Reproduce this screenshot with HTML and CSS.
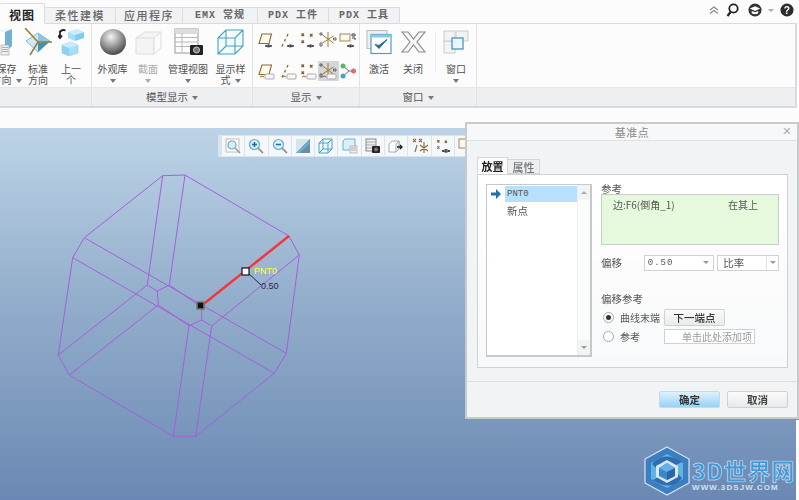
FILE: index.html
```html
<!DOCTYPE html>
<html lang="zh">
<head>
<meta charset="utf-8">
<title>基准点</title>
<link rel="stylesheet" href="styles.css">
</head>
<body>
<svg class="defs" width="0" height="0" aria-hidden="true">
  <defs>
    <symbol id="eye" viewBox="0 0 18 18"><path d="M8 15q3.500-2.500 7 0q-3.500 2-7 0z" fill="#fff" stroke="#444"/><circle cx="11.500" cy="15" r="1" fill="#333"/></symbol>
    <symbol id="tag" viewBox="0 0 18 18"><rect x="8" y="12" width="9" height="5" rx="1" fill="#f8f8f8" stroke="#aaa"/><path d="M3 15q2-2 4 0" fill="none" stroke="#8a6a30"/></symbol>
    <symbol id="plane" viewBox="0 0 18 18"><path d="M2 12.500L5 3H14.500L12 12.500Z" fill="#fdf9ee" stroke="#8a6a30" stroke-width="1.100"/></symbol>
    <symbol id="axis" viewBox="0 0 18 18"><path d="M9 3L8 5.500M6.500 8L5.500 10.500M4 13L3 15.500" stroke="#8a6a30" stroke-width="1.300" fill="none"/></symbol>
    <symbol id="pts" viewBox="0 0 18 18"><path d="M2.500 2.500l2.500 2.500m0-2.500l-2.500 2.500M11 3l2.500 2.500m0-2.500l-2.500 2.500M2.500 9.500l2.500 2.500m0-2.500l-2.500 2.500" stroke="#7b5d2a" stroke-width="1.200" fill="none"/></symbol>
    <symbol id="csys" viewBox="0 0 18 18"><path d="M9 1V16M3.500 4L14.500 12M3.500 12L14.500 5" stroke="#a07a30" stroke-width="1" fill="none"/><path d="M1 2h2v2H1zM14.500 7h2.500v2h-2.500zM1 12h2v3H1z" fill="none" stroke="#444" stroke-width=".8"/></symbol>
    <symbol id="note" viewBox="0 0 18 18"><rect x="1" y="3" width="10" height="7" fill="#fdf7e8" stroke="#a08a60"/><path d="M13 3h3v2h-3zM13 7h3v2" fill="none" stroke="#444"/></symbol>
  </defs>
</svg>

<header class="head">
  <div class="topbar">
    <nav class="tabs">
      <span class="tab tab-on">视图</span>
      <span class="tab tab-a">柔性建模</span>
      <span class="tab tab-b">应用程序</span>
      <span class="tab tab-c">EMX 常规</span>
      <span class="tab tab-d">PDX 工件</span>
      <span class="tab tab-d">PDX 工具</span>
    </nav>
    <div class="tools">
      <svg width="10" height="8" viewBox="0 0 10 8"><path d="M1 4l4-3 4 3M1 7.500l4-3 4 3" fill="none" stroke="#888" stroke-width="1.100"/></svg>
      <svg width="13" height="14" viewBox="0 0 13 14"><circle cx="7.500" cy="5.500" r="4.200" fill="#fff" stroke="#222" stroke-width="1.800"/><path d="M4.500 9L1.500 13" stroke="#222" stroke-width="2.200"/></svg>
      <svg class="tool-hat" width="14" height="14" viewBox="0 0 15 15"><circle cx="7.500" cy="7.500" r="7" fill="#333"/><path d="M2 6l5.500-2.500L13 6 7.500 8.500z" fill="#fff"/><path d="M4 8.500v2.500q3.500 2 7 0V8.500L7.500 10z" fill="#fff"/></svg>
      <span class="tool-caret"></span>
      <svg width="14" height="14" viewBox="0 0 15 15"><circle cx="7.500" cy="7.500" r="7" fill="#2d2d2d"/><text class="help" x="7.500" y="11.500" text-anchor="middle">?</text></svg>
    </div>
  </div>

  <section class="ribbon">
    <div class="group g1">
      <div class="items i1">
        <div class="item"><svg class="ic" width="27" height="28" viewBox="5 0 27 28"><path d="M0 3L5 1H24V18L19 24H0z" fill="#eef6fa"/><path d="M17 4L24 1V18L17 24z" fill="#6fb3d2"/><path d="M0 4H17V24H0z" fill="#fff"/><rect x="13" y="17" width="8" height="10" fill="#eee" stroke="#999" stroke-width=".6"/><path d="M14 19.500h6M14 21.500h6M14 23.500h6" stroke="#888" stroke-width=".6"/></svg><span class="lb">保存<br>方向<i class="car in"></i></span></div>
        <div class="item"><svg class="ic" width="28" height="28" viewBox="0 0 28 28"><path d="M2 13L14 5L26 13L14 24Z" fill="#cfeaf5" stroke="#7cb8d5"/><path d="M14 15L26 13L14 24Z" fill="#3f91b8"/><path d="M14 5L26 13L14 15Z" fill="#8cc6df"/><path d="M1 0L14 14M14 14H28M14 14L6 27" stroke="#9c7a35" stroke-width="1.500"/></svg><span class="lb">标准<br>方向</span></div>
        <div class="item"><svg class="ic" width="26" height="28" viewBox="0 0 26 28"><path d="M4 17L13 14L20 17V25L11 28L4 25Z" fill="#a6e0f8" stroke="#7cc6e6" stroke-width=".5"/><path d="M4 17L11 20V28L4 25Z" fill="#8ed2f1"/><path d="M4 17L13 14L20 17L11 20Z" fill="#c8eefc"/><path d="M10 4L19 1L26 4L17 7Z" fill="#c9ecfa"/><path d="M10 4L17 7V13L10 10Z" fill="#a4dff7"/><path d="M17 7L26 4V10L17 13Z" fill="#7fcdf0"/><path d="M1.500 4q3-3 6-1.500M2 3.500v6m-2-2l2 2.500 2-2.500" fill="none" stroke="#222" stroke-width="1.800"/></svg><span class="lb">上一<br>个</span></div>
      </div>
      <div class="cap"></div>
    </div>

    <div class="group g2">
      <div class="items i2">
        <div class="item"><svg class="ic" width="26" height="26" viewBox="0 0 26 26"><defs><radialGradient id="sph" cx=".42" cy=".3" r=".8"><stop offset="0" stop-color="#f4f4f4"/><stop offset=".55" stop-color="#8a8a8a"/><stop offset="1" stop-color="#2f2f2f"/></radialGradient></defs><circle cx="13" cy="13" r="13" fill="url(#sph)"/></svg><span class="lb">外观库<br><i class="car"></i></span></div>
        <div class="item off"><svg class="ic" width="27" height="26" viewBox="0 0 27 26"><path d="M1 9L10 3H26L19 9V25H1z" fill="#f4f4f4" stroke="#ddd"/><path d="M19 9L26 3V19L19 25z" fill="#fbfbfb" stroke="#ddd"/><path d="M1 9H19" stroke="#ddd"/></svg><span class="lb">截面<br><i class="car"></i></span></div>
        <div class="item"><svg class="ic" width="29" height="28" viewBox="0 0 29 28"><rect x="1" y="1" width="23" height="24" fill="#fdfdfd" stroke="#999"/><path d="M1 5H24M1 9.500H24M1 14H24M1 18.500H24" stroke="#b9b9b9"/><path d="M1 1H24V5H1z" fill="#ddd"/><path d="M8 5V25" stroke="#b9b9b9"/><rect x="16" y="17" width="13" height="10" rx="1" fill="#222"/><circle cx="22.500" cy="22" r="3" fill="#777" stroke="#ccc"/></svg><span class="lb">管理视图<br><i class="car"></i></span></div>
        <div class="item"><svg class="ic" width="27" height="26" viewBox="0 0 27 26"><path d="M1 9L9 1H26V17L18 25H1zM1 9H18V25M18 9L26 1M9 1V17H26M1 25L9 17" fill="#f2fafd" stroke="#4aa0c8" stroke-width="1.100"/></svg><span class="lb">显示样<br>式<i class="car in"></i></span></div>
      </div>
      <div class="cap">模型显示<i class="car in"></i></div>
    </div>

    <div class="group g3">
      <div class="items grid5">
        <span class="mini"><svg width="18" height="18"><use href="#plane"/><use href="#eye"/></svg></span>
        <span class="mini"><svg width="18" height="18"><use href="#axis"/><use href="#eye"/></svg></span>
        <span class="mini"><svg width="18" height="18"><use href="#pts"/><use href="#eye"/></svg></span>
        <span class="mini"><svg width="18" height="18"><use href="#csys"/></svg></span>
        <span class="mini"><svg width="18" height="18"><use href="#note"/><use href="#eye"/></svg></span>
        <span class="mini"><svg width="18" height="18"><use href="#plane"/><use href="#tag"/></svg></span>
        <span class="mini"><svg width="18" height="18"><use href="#axis"/><use href="#tag"/></svg></span>
        <span class="mini"><svg width="18" height="18"><use href="#pts"/><use href="#tag"/></svg></span>
        <span class="mini mini-on"><svg width="18" height="18"><use href="#csys"/><use href="#tag"/></svg></span>
        <span class="mini"><svg width="18" height="18" viewBox="0 0 18 18"><path d="M4 4L10 9L4 14M10 9H15" stroke="#777" fill="none"/><circle cx="4" cy="4" r="2.500" fill="#5cb85c"/><circle cx="4" cy="14" r="2.500" fill="#4a9fd0"/><circle cx="14.500" cy="9" r="2.500" fill="#e06a6a"/></svg></span>
      </div>
      <div class="cap">显示<i class="car in"></i></div>
    </div>

    <div class="group g4">
      <div class="items i4">
        <div class="item"><svg class="ic" width="26" height="25" viewBox="0 0 26 25"><rect x="1" y="1" width="20" height="18" fill="#eee" stroke="#bbb"/><rect x="5" y="5" width="20" height="19" fill="#fff" stroke="#4b9fc6" stroke-width="1.200"/><path d="M5 5H25V8H5z" fill="#8cc6df"/><path d="M9 15l4 4 8-9-8 6z" fill="#1e6d92" stroke="#1e6d92"/></svg><span class="lb">激活</span></div>
        <div class="item"><svg class="ic" width="25" height="22" viewBox="0 0 25 22"><path d="M1 1H7L12.500 8L18 1H24L16 11L24 21H18L12.500 14L7 21H1L9 11Z" fill="#f6f6f6" stroke="#8c8c8c" stroke-width="1.200"/></svg><span class="lb">关闭</span></div>
        <span class="vsep"></span>
        <div class="item"><svg class="ic" width="26" height="24" viewBox="0 0 26 24"><rect x="1" y="11" width="11" height="12" fill="#f3f3f3" stroke="#ccc"/><rect x="1" y="1" width="11" height="10" fill="#f3f3f3" stroke="#ccc"/><rect x="13" y="1" width="12" height="10" fill="#f3f3f3" stroke="#ccc"/><rect x="9" y="8" width="11" height="11" fill="#eaf6fc" stroke="#3f8fb8" stroke-width="1.200"/></svg><span class="lb">窗口<br><i class="car"></i></span></div>
      </div>
      <div class="cap">窗口<i class="car in"></i></div>
    </div>

    <div class="group g5"><div class="items"></div><div class="cap"></div></div>
  </section>
</header>

<div class="spacer"></div>

<main class="canvas">
  <div class="viewbar">
    <span class="vb"><svg width="16" height="16" viewBox="0 0 16 16"><rect x="1" y="1" width="13" height="13" fill="#fff" stroke="#bbb"/><circle cx="7" cy="7" r="4" fill="#d8edf6" stroke="#6aaac8" stroke-width="1.200"/><path d="M10 10l5 5" stroke="#999" stroke-width="1.600"/></svg></span>
    <span class="vb"><svg width="16" height="16" viewBox="0 0 16 16"><circle cx="6.500" cy="6.500" r="5" fill="#d8edf6" stroke="#6aaac8" stroke-width="1.200"/><path d="M4 6.500h5M6.500 4v5" stroke="#1f6f96" stroke-width="1.500"/><path d="M10 10l5 5" stroke="#999" stroke-width="1.800"/></svg></span>
    <span class="vb"><svg width="16" height="16" viewBox="0 0 16 16"><circle cx="6.500" cy="6.500" r="5" fill="#d8edf6" stroke="#6aaac8" stroke-width="1.200"/><path d="M4 6.500h5" stroke="#1f6f96" stroke-width="1.500"/><path d="M10 10l5 5" stroke="#999" stroke-width="1.800"/></svg></span>
    <span class="vb"><svg width="14" height="14" viewBox="0 0 14 14"><rect width="14" height="14" fill="#d6e4ec"/><path d="M0 14L14 0V14z" fill="#6f8d9e"/><path d="M2 14L14 3" stroke="#5db7de" stroke-width="2"/></svg></span>
    <span class="vb"><svg width="16" height="16" viewBox="0 0 16 16"><path d="M1 5L5 1H14V11L10 15H1zM1 5H10V15M10 5L14 1M5 1V11H14M1 15L5 11" fill="#f2fafd" stroke="#4aa0c8"/></svg></span>
    <span class="vb"><svg width="16" height="16" viewBox="0 0 16 16"><path d="M1 3L3 1H13V12H1z" fill="#d9eff9" stroke="#6fb3d2"/><rect x="8" y="8" width="7" height="7" fill="#eee" stroke="#999" stroke-width=".6"/><path d="M9 10h5M9 12h5" stroke="#888" stroke-width=".6"/></svg></span>
    <span class="vb"><svg width="16" height="16" viewBox="0 0 16 16"><rect x="1" y="1" width="10" height="12" fill="#eee" stroke="#888"/><path d="M1 4h10M1 7h10M1 10h10" stroke="#aaa"/><rect x="7" y="8" width="8" height="7" rx="1" fill="#222"/><circle cx="11" cy="11.500" r="2" fill="#777"/></svg></span>
    <span class="vb"><svg width="16" height="16" viewBox="0 0 16 16"><path d="M1 6L4 3H11V11L8 14H1z" fill="#fff" stroke="#aaa"/><path d="M8 6L11 3V11L8 14z" fill="#e8f3f8" stroke="#aaa"/><path d="M9 9h5M12 7l2 2-2 2" stroke="#222" stroke-width="1.300" fill="none"/></svg></span>
    <span class="vb"><svg width="16" height="16" viewBox="0 0 16 16"><path d="M1 1l3 3m0-3l-3 3M7 1l3 3m0-3l-3 3M5 7L3 14M12 4v11M8 7l8 6M8 13l8-6" stroke="#8a6a30" stroke-width="1.100" fill="none"/></svg></span>
    <span class="vb"><svg width="16" height="16" viewBox="0 0 16 16"><use href="#pts"/><path d="M7 13q4-3 8 0q-4 2.500-8 0z" fill="#fff" stroke="#333"/><circle cx="11" cy="13" r="1" fill="#333"/></svg></span>
    <span class="vb"><svg width="16" height="16" viewBox="0 0 16 16"><rect x="1" y="1" width="12" height="9" fill="#fdf7e8" stroke="#a08a60"/><path d="M9 13h6" stroke="#222" stroke-width="1.500"/></svg></span>
    <span class="vb"></span>
  </div>

  <svg class="model" viewBox="0 128 796 372" width="796" height="372" aria-hidden="true">
    <g fill="none" stroke="#a45fdc" stroke-width="1">
      <path d="M162.700 175.700L185 175L289 236L299.300 255L286.300 353.300L274.300 373.300L195.700 436.300L173.300 436.300L69.300 375L58.300 355L72.700 257.700L84.300 237.700Z"/>
      <path d="M162.700 175.700L147.300 285L157.300 291L169.300 285L185 175"/>
      <path d="M157.300 291L158.300 305L189 325.700L173.300 436.300M195.700 436.300L211.700 326L201.700 320L189 325.700"/>
      <path d="M201.700 306V320M169.300 285L200 306"/>
      <path d="M84.300 237.700L286.300 353.300M72.700 257.700L274.300 373.300"/>
      <path d="M147.300 285L58.300 355M158.300 305L69.300 375M211.700 326L299.300 255"/>
    </g>
    <path d="M200.500 306.500L289 236" stroke="#f6333a" stroke-width="2.400"/>
    <path d="M247 272L261 285" stroke="#1c2a4a" stroke-width="1"/>
    <rect x="197" y="302" width="7" height="7" fill="#111" stroke="#777" stroke-width="1.500"/>
    <rect x="242" y="268" width="7" height="7" fill="#fff" stroke="#111" stroke-width="1.200"/>
    <text class="t-pnt" x="254" y="274">PNT0</text>
    <text class="t-val" x="261" y="289">0.50</text>
  </svg>

  <div class="brand">
    <svg width="46" height="50" viewBox="0 0 46 50"><path d="M23 1L45 13V37L23 49L1 37V13Z" fill="#3d7ec0" stroke="#d7e6f3" stroke-width="1.200"/><path d="M23 8L39 17V33L23 42L7 33V17Z" fill="#5fb4e2"/><path d="M8 18Q20 4 38 16L30 20Q20 12 14 24Z" fill="#2f6cb0"/><path d="M38 32Q28 46 9 34L17 30Q26 38 32 26Z" fill="#2f6cb0"/><path d="M23 14L34 20V31L23 37L12 31V20Z" fill="#d7e6f3"/><path d="M23 17L31 22V30L23 34L15 30V22Z" fill="#3f86c8"/><path d="M23 17L31 22L23 26L15 22Z" fill="#65b0e6"/><path d="M23 26L31 22V30L23 34Z" fill="#2a66a8"/></svg>
    <div class="brand-text"><span class="brand-name">3D世界网</span><span class="brand-url">WWW.3DSJW.COM</span></div>
  </div>
</main>

<aside class="dialog">
  <div class="d-title"><span>基准点</span><span class="d-x">✕</span></div>
  <div class="d-body">
    <div class="d-tabs"><span class="d-tab d-tab-on">放置</span><span class="d-tab">属性</span></div>
    <div class="d-panel">
      <div class="list">
        <div class="list-main">
          <div class="row row-on"><svg class="arrow" width="10" height="10" viewBox="0 0 10 10"><path d="M0 3.500H5V0L10 5L5 10V6.500H0Z" fill="#1b74ad"/></svg><span class="row-t">PNT0</span></div>
          <div class="row"><span class="row-t cn">新点</span></div>
        </div>
        <div class="scroll"><span class="sb"><i class="up"></i></span><span class="sb"><i class="down"></i></span></div>
      </div>
      <div class="form">
        <div class="f-label">参考</div>
        <div class="ref"><span>边:F6(倒角_1)</span><span>在其上</span></div>
        <div class="offset">
          <span class="off-l">偏移</span>
          <span class="combo c-val"><span class="num">0.50</span><i class="down"></i></span>
          <span class="combo c-rate"><span>比率</span><b class="sel"><i class="down"></i></b></span>
        </div>
        <div class="f-label f2">偏移参考</div>
        <div class="opt"><span class="radio radio-on"></span><span class="opt-t">曲线末端</span><span class="btn-s">下一端点</span></div>
        <div class="opt opt2"><span class="radio"></span><span class="opt-t">参考</span><span class="ph">单击此处添加项</span></div>
      </div>
    </div>
  </div>
  <div class="d-foot"><span class="btn btn-ok">确定</span><span class="btn">取消</span></div>
</aside>
</body>
</html>
```

FILE: styles.css
```css
* { box-sizing: border-box; }
html, body { margin: 0; padding: 0; }
body {
  width: 799px; height: 500px; overflow: hidden; position: relative;
  background: #fcfcfd; color: #444;
  font: 10px/12px "Noto Sans CJK SC", "Liberation Sans", sans-serif;
  filter: blur(.4px);
}
.defs { position: absolute; }
.head { width: 797px; height: 108px; display: flex; flex-direction: column; }
.topbar { height: 24px; display: flex; justify-content: space-between; position: relative; z-index: 1; margin-bottom: -1px; }
.tabs { display: flex; align-items: flex-end; height: 24px; }
.tab { height: 17px; margin-top: 7px; background: #f1f2f4; border: 1px solid #dcdde0; border-left: 0; border-bottom: 1px solid #d9dadd; color: #666; font-size: 11px; line-height: 15px; font-weight: 500; letter-spacing: 1.500px; text-align: center; }
.tab-on { height: 21px; margin-top: 3px; width: 45px; background: #fcfcfd; border-bottom-color: #fcfcfd; border-radius: 2px 2px 0 0; color: #222; font-weight: 700; font-size: 12px; letter-spacing: 1px; line-height: 21px; }
.tab-a { width: 71px; }
.tab-b { width: 67px; }
.tab-c { width: 75px; font-family: "Liberation Mono", "Noto Sans CJK SC", monospace; font-size: 10px; font-weight: 700; letter-spacing: 1px; }
.tab-d { width: 71px; font-family: "Liberation Mono", "Noto Sans CJK SC", monospace; font-size: 10px; font-weight: 700; letter-spacing: 1px; }
.tools { display: flex; align-items: center; gap: 7px; padding: 2px 3px 0 0; height: 18px; }
.tool-hat { margin-left: 2px; }
.tool-caret { width: 0; height: 0; border: 3px solid transparent; border-top-color: #aaa; margin: 3px -1px 0; }
.help { fill: #fff; font: 700 11px "Liberation Sans", sans-serif; }
.ribbon { flex: 1; display: flex; border: 1px solid #d9dadd; border-width: 1px 2px 2px 0; background: #fcfcfd; overflow: hidden; }
.group { display: flex; flex-direction: column; border-right: 1px solid #e2e3e6; }
.g1 { width: 92px; }
.g2 { width: 161px; }
.g3 { width: 107px; }
.g4 { width: 117px; }
.g5 { flex: 1; border-right: 0; }
.items { flex: 1; display: flex; }
.cap { height: 19px; background: #eeeff1; border-top: 1px solid #e6e7e9; text-align: center; line-height: 18px; color: #555; font-size: 10.500px; }
.item { display: flex; flex-direction: column; align-items: center; padding-top: 4px; flex: none; text-align: center; }
.ic { flex: none; height: 28px; }
.lb { margin-top: 8px; line-height: 10.500px; font-size: 10px; color: #505050; white-space: nowrap; }
.off .lb { color: #a9a9a9; }
.off .car { border-top-color: #aaa; }
.car { display: inline-block; width: 0; height: 0; border: 3.500px solid transparent; border-top: 4px solid #777; border-bottom: 0; vertical-align: middle; }
.car.in { margin-left: 4px; }
.i1 { margin-left: -10px; }
.i1 .item:nth-child(1) { width: 33px; }
.i1 .item:nth-child(2) { width: 30px; }
.i1 .item:nth-child(3) { width: 36px; }
.i2 .item:nth-child(1) { width: 41px; }
.i2 .item:nth-child(2) { width: 30px; }
.i2 .item:nth-child(3) { width: 50px; }
.i2 .item:nth-child(4) { width: 35px; }
.grid5 { display: grid; grid-template-columns: 23px 21px 20px 20px 20px; grid-template-rows: 31px 24px; padding: 6px 0 0 1px; justify-items: center; align-content: start; }
.mini { width: 21px; height: 20px; display: flex; align-items: center; justify-content: center; }
.mini-on { background: #d4d6d8; }
.i4 { padding-left: 6px; }
.i4 .item:nth-child(1) { width: 26px; }
.i4 .item:nth-child(2) { width: 42px; }
.i4 .item:nth-child(4) { width: 40px; }
.vsep { width: 1px; height: 40px; margin: 8px 0 0 1px; background: #eee; }
.spacer { height: 20px; width: 797px; }
.canvas { width: 796px; height: 372px; position: relative; background: linear-gradient(#bdd4e7, #94afcc 45%, #6a88b3); overflow: hidden; }
.model { position: absolute; left: 0; top: 0; }
.t-pnt { fill: #ffff33; font: 9px "Liberation Sans", sans-serif; }
.t-val { fill: #1c2a4a; font: 9px "Liberation Sans", sans-serif; }
.viewbar { position: absolute; left: 218px; top: 7px; display: flex; gap: 1px; padding: 1px 0 1px 4px; height: 22px; background: #d9e4ee; }
.vb { width: 22.300px; height: 20px; background: #f5f8fa; display: flex; align-items: center; justify-content: center; }
.brand { position: absolute; left: 644px; top: 318px; display: flex; gap: 2px; align-items: center; }
.brand-text { display: flex; flex-direction: column; align-items: flex-start; width: 106px; padding-top: 6px; }
.brand-name { font: 700 23px/26px "Noto Sans CJK SC", sans-serif; color: #3f97d6; -webkit-text-stroke: .4px #e3eef8; text-shadow: 0 0 1px #dcebf8; white-space: nowrap; letter-spacing: .8px; }
.brand-url { font: 700 8px/9px "Liberation Sans", sans-serif; color: #cfe2f2; letter-spacing: 1.100px; white-space: nowrap; }
.dialog { position: absolute; left: 465px; top: 122px; width: 334px; height: 297px; background: #f2f3f5; border: 2px solid #c8cbce; display: flex; flex-direction: column; box-shadow: 0 1px 0 #7e96b6; }
.d-title { height: 17px; flex: none; border-bottom: 1px solid #dfe1e3; display: flex; justify-content: center; align-items: center; position: relative; background: #f7f8f9; color: #8a8a8a; font-size: 11px; letter-spacing: .5px; }
.d-x { position: absolute; right: 5px; top: 2px; color: #aaa; font-size: 11px; font-family: "DejaVu Sans", sans-serif; font-weight: 700; }
.d-body { flex: 1; padding: 17px 9px 0 10px; display: flex; flex-direction: column; }
.d-tabs { display: flex; height: 17px; position: relative; z-index: 1; margin-bottom: -1px; }
.d-tab { height: 15px; margin-top: 1px; width: 32px; text-align: center; background: #eceef0; border: 1px solid #d4d6d9; border-left: 0; line-height: 14px; font-size: 11px; color: #777; font-weight: 500; }
.d-tab-on { height: 17px; margin-top: -1px; background: #fbfbfc; border-left: 1px solid #d4d6d9; border-bottom-color: #fbfbfc; color: #222; font-weight: 700; line-height: 17px; width: 31px; }
.d-panel { height: 194px; border: 1px solid #cfd1d4; background: linear-gradient(#fff, #f8f9fa); display: flex; padding: 9px 0 0 8px; gap: 9px; }
.list { width: 106px; height: 173px; border: 1px solid #c6c8cb; border-width: 1px 2px 2px 1px; background: #fff; display: flex; }
.list-main { flex: 1; padding-top: 1px; }
.row { height: 16px; display: flex; align-items: center; padding-left: 18px; position: relative; margin-bottom: 1px; }
.row-on .row-t { background: #b7e1fb; height: 16px; width: 72px; line-height: 16px; }
.row-t { padding-left: 2px; color: #555; font: 9px/16px "Liberation Mono", monospace; }
.row-t.cn { font: 10.500px/16px "Noto Sans CJK SC", sans-serif; }
.arrow { position: absolute; left: 4px; top: 3px; }
.scroll { width: 15px; border-left: 1px solid #eceef0; display: flex; flex-direction: column; justify-content: space-between; background: #fafbfb; }
.sb { height: 15px; display: flex; align-items: center; justify-content: center; background: #f2f3f4; }
.up, .down { display: block; width: 0; height: 0; border: 3px solid transparent; }
.up { border-bottom-color: #aaa; border-top: 0; }
.down { border-top-color: #999; border-bottom: 0; }
.form { width: 178px; }
.f-label { color: #555; font-size: 10.500px; line-height: 10px; }
.ref { height: 51px; background: #e6f9dc; border: 1px solid #c9cccb; display: flex; justify-content: space-between; padding: 2px 20px 0 11px; color: #555; font-size: 10px; line-height: 15px; white-space: nowrap; }
.offset { display: flex; align-items: center; height: 17px; margin-top: 9px; }
.off-l { width: 43px; font-size: 10.500px; color: #555; }
.combo { height: 16px; background: #fff; border: 1px solid #cfd1d4; display: flex; align-items: center; justify-content: space-between; color: #555; }
.c-val { width: 71px; padding: 0 4px 0 3px; }
.num { font: 9px "Liberation Mono", monospace; letter-spacing: 1px; }
.c-rate { width: 62px; margin-left: 3px; padding-left: 5px; font-size: 10.500px; }
.sel { width: 12px; height: 14px; border-left: 1px solid #dfe1e3; display: flex; align-items: center; justify-content: center; }
.f2 { margin-top: 23px; }
.opt { display: flex; align-items: center; height: 17px; margin-top: 5px; padding-left: 2px; }
.opt2 { margin-top: 2px; height: 17px; }
.radio { width: 11px; height: 11px; border: 1px solid #a9abad; border-radius: 50%; background: #fff; margin-right: 6px; display: flex; align-items: center; justify-content: center; }
.radio-on::after { content: ""; width: 5px; height: 5px; border-radius: 50%; background: #333; }
.opt-t { width: 44px; flex: none; color: #555; font-size: 10px; white-space: nowrap; }
.btn-s { width: 61px; height: 17px; text-align: center; background: linear-gradient(#fbfbfb, #e9eaeb); border: 1px solid #cfd1d3; border-radius: 2px; color: #333; font-weight: 500; font-size: 10.500px; line-height: 15px; }
.ph { width: 91px; height: 15px; border: 1px solid #cfd1d4; background: #fff; color: #999; text-align: right; font-size: 10px; line-height: 13px; padding-right: 2px; white-space: nowrap; }
.d-foot { height: 36px; flex: none; border-top: 1px solid #dcdee0; display: flex; justify-content: flex-end; gap: 7px; padding: 9px 9px 0 0; }
.btn { width: 61px; height: 17px; background: linear-gradient(#fbfbfb, #e8e9ea); border: 1px solid #cfd1d3; border-radius: 2px; text-align: center; line-height: 15px; font-weight: 700; font-size: 10.500px; color: #444; }
.btn-ok { background: linear-gradient(#dff1fc, #98d2f6); border-color: #bcdcf2; color: #333; }
```
